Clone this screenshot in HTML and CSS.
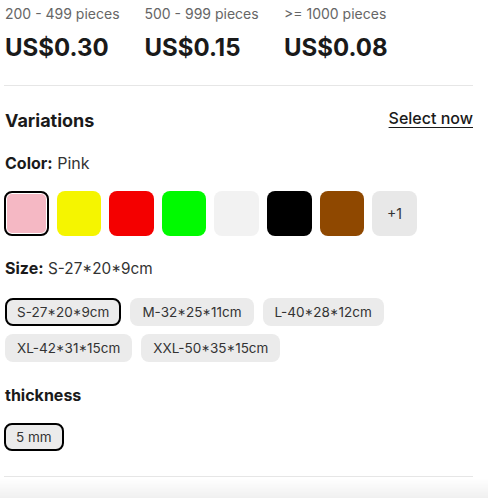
FILE: index.html
```html
<!DOCTYPE html>
<html lang="en">
<head>
<meta charset="utf-8">
<link rel="stylesheet" href="styles.css">
</head>
<body>
<div class="page">
  <div class="tiers">
    <div class="tier"><div class="tier-label">200 - 499 pieces</div><div class="tier-price">US$0.30</div></div>
    <div class="tier"><div class="tier-label">500 - 999 pieces</div><div class="tier-price">US$0.15</div></div>
    <div class="tier"><div class="tier-label">&gt;= 1000 pieces</div><div class="tier-price">US$0.08</div></div>
  </div>
  <hr class="divider">
  <div class="var-head">
    <h2 class="var-title">Variations</h2>
    <a class="select-now" href="#">Select now</a>
  </div>
  <div class="prop-label color-label"><b>Color:</b> Pink</div>
  <div class="swatches">
    <span class="swatch selected" style="background:#f5b8c4"></span>
    <span class="swatch" style="background:#f5f500"></span>
    <span class="swatch" style="background:#f40000"></span>
    <span class="swatch" style="background:#00fa00"></span>
    <span class="swatch" style="background:#f2f2f2"></span>
    <span class="swatch" style="background:#000000"></span>
    <span class="swatch" style="background:#8f4800"></span>
    <span class="swatch more">+1</span>
  </div>
  <div class="prop-label size-label"><b>Size:</b> <span class="val">S-27*20*9cm</span></div>
  <div class="chips">
    <span class="chip selected">S-27*20*9cm</span>
    <span class="chip">M-32*25*11cm</span>
    <span class="chip">L-40*28*12cm</span>
    <span class="chip">XL-42*31*15cm</span>
    <span class="chip">XXL-50*35*15cm</span>
  </div>
  <div class="prop-title">thickness</div>
  <div class="chips thick-chips">
    <span class="chip selected">5 mm</span>
  </div>
  <hr class="divider bottom-divider">
</div>
<div class="bottom-shade"></div>
</body>
</html>
```
FILE: styles.css
```css
html, body {
  margin: 0;
  padding: 0;
  background: #fff;
}
body {
  font-family: Inter, "Noto Sans", "Liberation Sans", sans-serif;
  color: #1a1a1a;
  overflow: hidden;
}
.page {
  padding: 4px 15px 0 4px;
}
.tiers {
  display: flex;
  padding-left: 1px;
}
.tier {
  width: 139.5px;
}
.tier-label {
  font-size: 14px;
  line-height: 20px;
  color: #666;
}
.tier-price {
  margin-top: 8px;
  font-size: 24px;
  line-height: 32px;
  font-weight: 700;
  color: #1a1a1a;
}
.divider {
  border: 0;
  border-top: 1px solid #e6e6e6;
  margin: 21px 0 0 0;
  height: 0;
}
.var-head {
  display: flex;
  justify-content: space-between;
  align-items: center;
  margin-top: 22px;
  padding-left: 1px;
  height: 24px;
}
.var-title {
  margin: 0;
  font-size: 18px;
  font-weight: 700;
  line-height: 24px;
  position: relative;
  top: 1px;
}
.select-now {
  font-size: 16px;
  font-weight: 500;
  color: #1a1a1a;
  text-decoration: underline;
  text-underline-offset: 3px;
  margin-top: -4px;
}
.prop-label {
  font-size: 16px;
  line-height: 20px;
  color: #333;
  padding-left: 1px;
}
.prop-label b {
  color: #1a1a1a;
  font-weight: 700;
}
.prop-label .val {
  font-size: 15.3px;
}
.color-label {
  margin-top: 21px;
}
.swatches {
  display: flex;
  gap: 8px;
  margin-top: 18px;
}
.swatch {
  width: 44.6px;
  height: 44.6px;
  border-radius: 8px;
  box-sizing: border-box;
  display: flex;
  align-items: center;
  justify-content: center;
}
.swatch.selected {
  border: 2px solid #000;
  box-shadow: inset 0 0 0 1px #fff;
}
.swatch.more {
  background: #e8e8e8;
  font-size: 14px;
  color: #333;
}
.size-label {
  margin-top: 22px;
}
.chips {
  display: flex;
  flex-wrap: wrap;
  gap: 8px 9px;
  margin-top: 19px;
  padding-left: 1px;
}
.chip {
  box-sizing: border-box;
  height: 28px;
  line-height: 28px;
  padding: 0 12px;
  background: #ebebeb;
  border-radius: 8px;
  font-size: 13.5px;
  color: #333;
}
.chip.selected {
  border: 2px solid #000;
  line-height: 24px;
  padding: 0 10px;
}
.prop-title {
  margin-top: 22px;
  font-size: 16px;
  font-weight: 700;
  line-height: 22px;
  padding-left: 1px;
  color: #1a1a1a;
}
.thick-chips {
  margin-top: 17px;
  padding-left: 0;
}
.bottom-divider {
  margin-top: 25px;
}
.bottom-shade {
  position: fixed;
  left: 0;
  right: 0;
  bottom: 0;
  height: 20px;
  background: linear-gradient(to bottom, rgba(0,0,0,0), rgba(0,0,0,0.06));
}
```
